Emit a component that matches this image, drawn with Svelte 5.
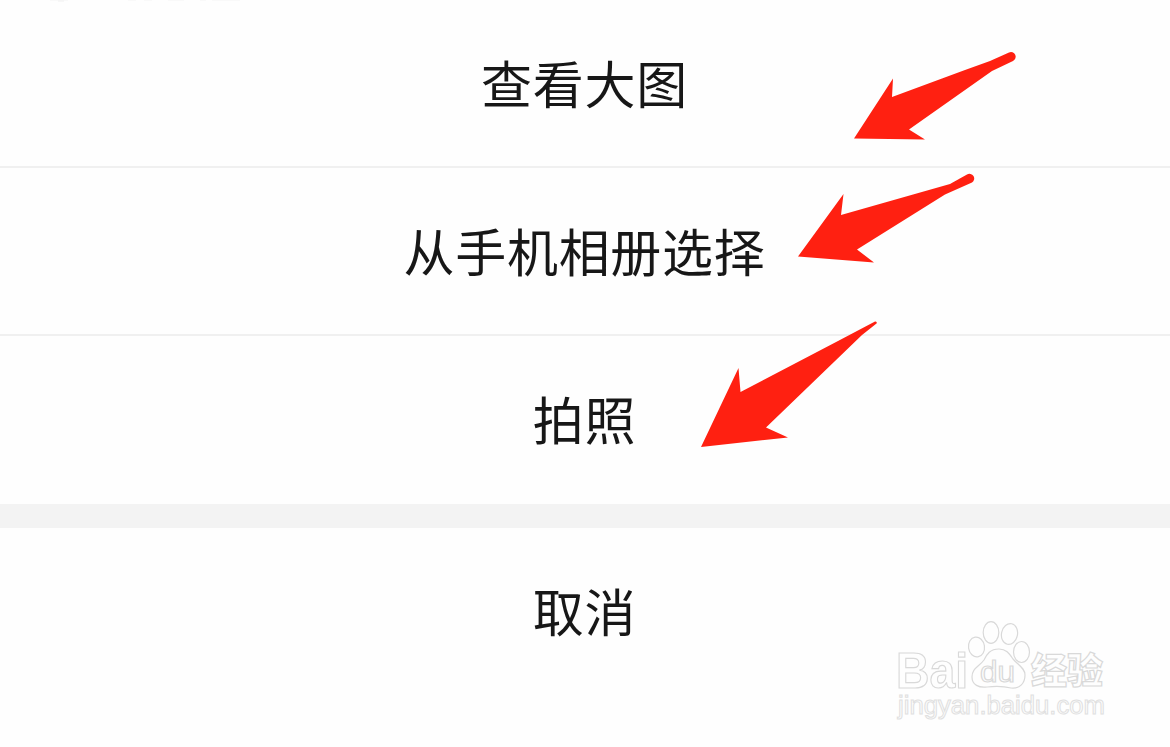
<script lang="ts">
	const actions = ['查看大图', '从手机相册选择', '拍照'];

	const arrows = [
		'M854 138.500L893 78.500L892 97L965 70L990 61L1009 52.500A4.600 4.600 0 0 1 1013 61L992 71L909 129.500L925 139.500Z',
		'M798 256.500L843.500 194L841 215L950 184L967 174.500A4.500 4.500 0 0 1 972 182.500L945 194.500L857 249.500L874 262.500Z',
		'M701 447L738.500 368L740.500 392L838 341L875 321.500A1.300 1.300 0 0 1 876.500 323.500L862 335L766 427.500L788 437.500Z'
	];
</script>

<main>
	<ul>
		{#each actions as action}
			<li><button>{action}</button></li>
		{/each}
	</ul>
	<button class="cancel">取消</button>

	<svg class="marks" viewBox="0 0 1170 747" aria-hidden="true">
		<g class="edge">
			<path d="M50 .5H68M128 .5H136M144 .5H152M168 .5H184M200 .5H206M212 .5H240" />
			<path class="dot" d="M58 1H64" />
		</g>
		{#each arrows as d}
			<path class="arrow" {d} />
		{/each}

		<g class="watermark">
			<text class="brand" x="896" y="687.500" textLength="72" lengthAdjust="spacingAndGlyphs">Bai</text>
			<ellipse cx="976.500" cy="647" rx="8" ry="10" transform="rotate(-8 976.500 647)" />
			<ellipse cx="991" cy="632.500" rx="7.800" ry="10.800" />
			<ellipse cx="1009.500" cy="634" rx="8" ry="10.500" transform="rotate(12 1009.500 634)" />
			<ellipse cx="1021.500" cy="652" rx="8" ry="10.500" />
			<path d="M999 649C990 649 987 654 984 660C979 667 972 668 972 677C972 685 979 688 987 687C996 686 1003 686 1011 688C1020 689 1025 683 1025 675C1025 668 1018 665 1013 659C1009 653 1006 649 999 649Z" />
			<text class="du" x="980" y="682" textLength="35" lengthAdjust="spacingAndGlyphs">du</text>
			<text class="name" x="1031" y="684" textLength="72" lengthAdjust="spacingAndGlyphs">经验</text>
			<text class="site" x="898" y="714" textLength="207" lengthAdjust="spacingAndGlyphs">jingyan.baidu.com</text>
		</g>
	</svg>
</main>

<style>
	:global(body) {
		background: #fefefe;
	}

	main {
		position: relative;
		height: 747px;
		overflow: hidden;
		font-family: 'Noto Sans CJK SC', sans-serif;
	}

	ul {
		margin: 0;
		padding: 0;
		list-style: none;
		border-bottom: 24px solid #f3f3f3;
	}

	li {
		box-sizing: border-box;
		height: 168px;
		border-bottom: 2px solid #f0f0f0;
	}

	li:last-child {
		border-bottom: 0;
	}

	button {
		display: block;
		width: 100%;
		height: 168px;
		padding: 0 1px 4px 0;
		border: 0;
		background: none;
		color: #171717;
		font: inherit;
		font-size: 51px;
		letter-spacing: 0.7px;
	}

	.marks {
		position: absolute;
		inset: 0;
		width: 1170px;
		height: 747px;
		pointer-events: none;
	}

	.edge {
		fill: none;
		stroke: #f9f9f9;
	}

	.dot {
		stroke: #f0f0f0;
	}

	.arrow {
		fill: #ff2011;
	}

	.watermark {
		fill: #fefefe;
		stroke: #d9d9d9;
		stroke-width: 1.2;
		font-family: 'Liberation Sans', sans-serif;
	}

	.brand {
		font-size: 50px;
		font-weight: bold;
	}

	.du {
		font-size: 29px;
	}

	.name {
		font-family: 'Noto Sans CJK SC', sans-serif;
		font-size: 36px;
		font-weight: 900;
	}

	.site {
		font-family: 'Liberation Sans', sans-serif;
		font-size: 25px;
		stroke: #e0e0e0;
		stroke-width: 1;
	}
</style>
